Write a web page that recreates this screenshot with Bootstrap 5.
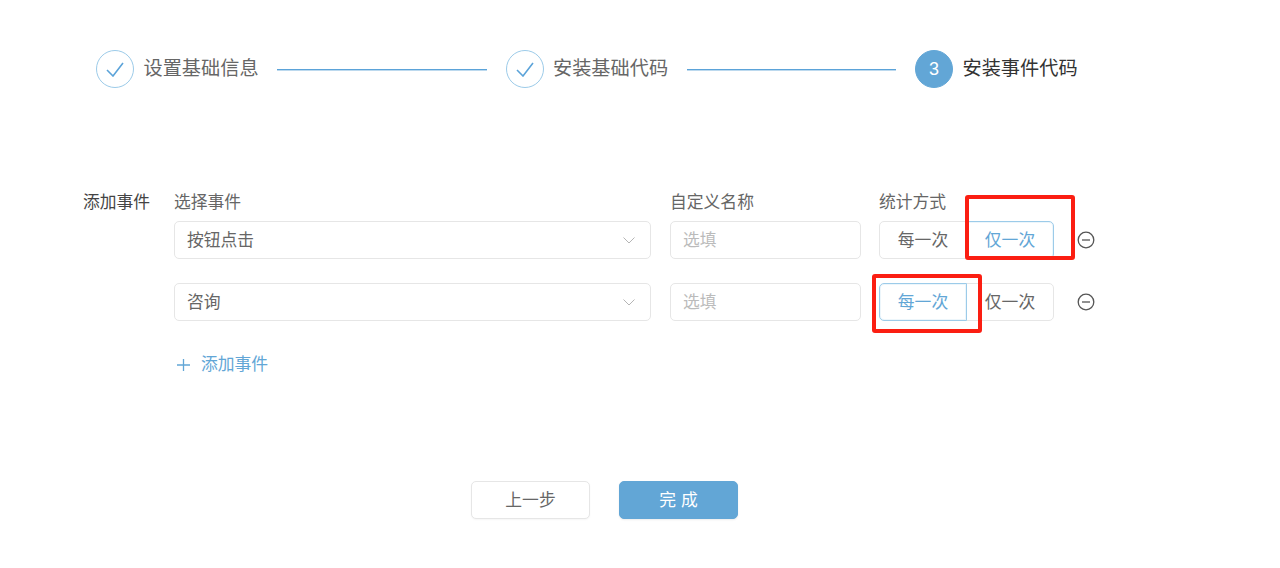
<!DOCTYPE html>
<html lang="zh">
<head>
<meta charset="utf-8">
<title>安装事件代码</title>
<link rel="stylesheet" href="https://cdn.jsdelivr.net/npm/bootstrap@5.3.0/dist/css/bootstrap.min.css">
<style>
html,body{height:568px;overflow:hidden}
body{background:#fff;color:#666;font-family:"Liberation Sans","Noto Sans CJK SC",sans-serif;font-size:16.8px}
.page-wrap{width:1280px;height:568px;padding:50px 0 0 96px}
.step-bar{height:38px;width:981px}
.step-dot{width:38px;height:38px;border-radius:50%;border:1px solid #9ccbe9;color:#5ba3d9;flex:none}
.step-dot.current{background:#62a6d6;border-color:#62a6d6;color:#fff;font-size:18px}
.step-name{font-size:19.2px;color:#666;margin-left:9.5px;width:114.5px;flex:none;white-space:nowrap;line-height:38px}
.step-name.current{color:#333}
.step-line{height:1px;background:#5ba3d9;box-shadow:0 1px 0 #bcd9ee;flex:0 0 209.5px;margin:1px 19px 0 19px}
.form-area{margin:103px 0 0 -13px;width:1100px}
.side-label{width:91px;flex:none;color:#444;line-height:24px}
.col-event{width:477px;flex:none;margin-right:19px}
.col-name{width:191px;flex:none;margin-right:18px}
.col-mode{width:175px;flex:none}
.head-row{height:24px;line-height:24px;margin-bottom:6px}
.ev-row{height:38px;margin-bottom:24px}
.ev-field{height:38px;font-size:16.8px;color:#666;border:1px solid #e6e6e6;border-radius:5px;padding:2px 12px 0;box-shadow:none;line-height:34px}
.ev-field::placeholder{color:#bbb}
select.ev-field{background-image:url("data:image/svg+xml,%3Csvg xmlns='http://www.w3.org/2000/svg' viewBox='0 0 12 7'%3E%3Cpath d='M.5.5l5.500 5.500 5.500-5.500' fill='none' stroke='%23b5b5b5' stroke-width='1'/%3E%3C/svg%3E");background-size:12px 7px;background-position:right 15px center}
.seg-wrap{position:relative;width:175px;height:38px}
.seg-btn{width:87.5px;height:38px;padding:2px 0 0;font-size:16.8px;color:#666;background:#fff;border:1px solid #e6e6e6;border-radius:5px;line-height:34px}
.seg-btn.chosen{color:#62a6d6;border-color:#9ccbe9;box-shadow:inset 0 0 0 1px rgba(156,203,233,.18);z-index:2}
.seg-btn:hover{background:#fff;color:#666}
.minus-btn{margin:-1px 0 0 23px;flex:none;display:block}
.note-box{position:absolute;border:4px solid #fb1e12;border-radius:3px;pointer-events:none;z-index:5}
.note-a{left:86px;top:-26px;width:110px;height:65px}
.note-b{left:-7px;top:-9px;width:110px;height:59px}
.add-row{margin:32px 0 0 91px;color:#62a6d6;line-height:24px;height:24px}
.add-row svg{margin-right:1px}
.foot-row{margin:104px 0 0 388px;gap:29px}
.foot-btn{width:119px;height:38px;padding:2px 0 0;font-size:16.8px;border-radius:5px;line-height:34px}
.foot-back{background:#fff;border:1px solid #e6e6e6;color:#666;box-shadow:0 1px 2px rgba(0,0,0,.04)}
.foot-done{background:#62a6d6;border:1px solid #62a6d6;color:#fff;letter-spacing:5px;padding-left:5px;box-shadow:0 1px 2px rgba(0,0,0,.08)}
</style>
</head>
<body>
<div class="page-wrap">
  <div class="step-bar d-flex align-items-center">
    <div class="step-dot d-flex align-items-center justify-content-center">
      <svg width="18" height="15" viewBox="0 0 18 15"><path d="M1 8l6 6L17 1" fill="none" stroke="#5ba3d9" stroke-width="1.6"/></svg>
    </div>
    <div class="step-name">设置基础信息</div>
    <div class="step-line"></div>
    <div class="step-dot d-flex align-items-center justify-content-center">
      <svg width="18" height="15" viewBox="0 0 18 15"><path d="M1 8l6 6L17 1" fill="none" stroke="#5ba3d9" stroke-width="1.6"/></svg>
    </div>
    <div class="step-name">安装基础代码</div>
    <div class="step-line"></div>
    <div class="step-dot current d-flex align-items-center justify-content-center">3</div>
    <div class="step-name current">安装事件代码</div>
  </div>

  <div class="form-area">
    <div class="d-flex head-row">
      <div class="side-label">添加事件</div>
      <div class="col-event">选择事件</div>
      <div class="col-name">自定义名称</div>
      <div class="col-mode">统计方式</div>
    </div>
    <div class="d-flex ev-row align-items-center">
      <div class="side-label"></div>
      <div class="col-event"><select class="form-select ev-field"><option>按钮点击</option></select></div>
      <div class="col-name"><input class="form-control ev-field" placeholder="选填"></div>
      <div class="seg-wrap">
        <div class="btn-group w-100">
          <button type="button" class="btn seg-btn">每一次</button>
          <button type="button" class="btn seg-btn chosen">仅一次</button>
        </div>
        <div class="note-box note-a"></div>
      </div>
      <svg class="minus-btn" width="18" height="18" viewBox="0 0 18 18"><circle cx="9" cy="9" r="7.8" fill="none" stroke="#555" stroke-width="1.3"/><path d="M5 9h8" stroke="#555" stroke-width="1.3"/></svg>
    </div>
    <div class="d-flex ev-row align-items-center">
      <div class="side-label"></div>
      <div class="col-event"><select class="form-select ev-field"><option>咨询</option></select></div>
      <div class="col-name"><input class="form-control ev-field" placeholder="选填"></div>
      <div class="seg-wrap">
        <div class="btn-group w-100">
          <button type="button" class="btn seg-btn chosen">每一次</button>
          <button type="button" class="btn seg-btn">仅一次</button>
        </div>
        <div class="note-box note-b"></div>
      </div>
      <svg class="minus-btn" width="18" height="18" viewBox="0 0 18 18"><circle cx="9" cy="9" r="7.8" fill="none" stroke="#555" stroke-width="1.3"/><path d="M5 9h8" stroke="#555" stroke-width="1.3"/></svg>
    </div>
    <div class="add-row d-flex align-items-center gap-2">
      <svg width="18" height="14" viewBox="0 0 18 14"><path d="M3 7h13M9.500 1v12" stroke="#62a6d6" stroke-width="1.3"/></svg>
      <span>添加事件</span>
    </div>
    <div class="foot-row d-flex">
      <button type="button" class="btn foot-btn foot-back">上一步</button>
      <button type="button" class="btn foot-btn foot-done">完成</button>
    </div>
  </div>
</div>
</body>
</html>
